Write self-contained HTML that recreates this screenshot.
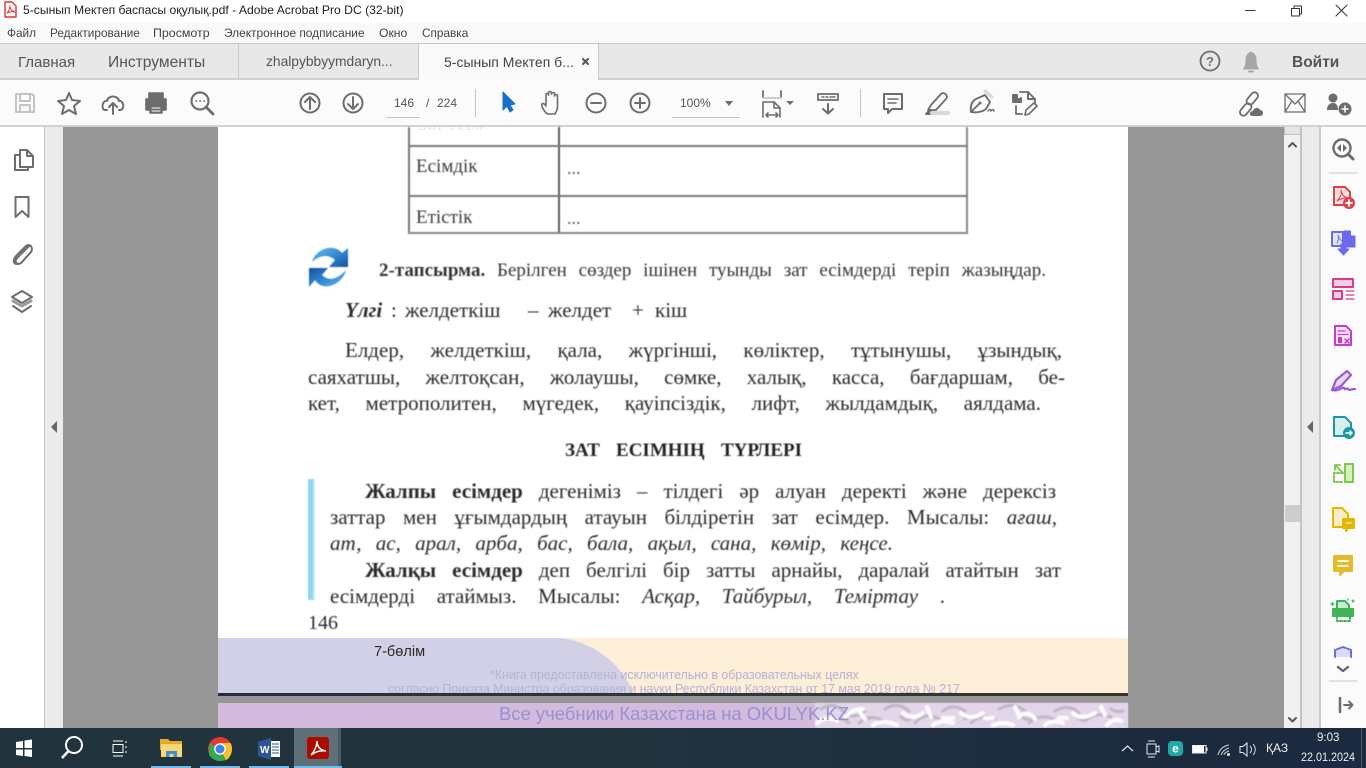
<!DOCTYPE html>
<html><head><meta charset="utf-8"><title>Acrobat</title>
<style>
html,body{margin:0;padding:0;width:1366px;height:768px;overflow:hidden;background:#979797}
*{box-sizing:border-box}
.a{position:absolute}
.t{position:absolute;white-space:nowrap;font-family:"Liberation Sans",sans-serif;color:#333}
.l{position:absolute;font-family:"Liberation Serif",serif;color:#2a2a2a;font-size:21px;line-height:28px;height:28px;overflow:hidden;text-align:justify;text-align-last:justify;filter:blur(.45px)}
.l i{font-style:italic}
.w{position:absolute;top:296px;white-space:nowrap;font-family:"Liberation Serif",serif;color:#2a2a2a;font-size:21px;line-height:28px;filter:blur(.45px)}
svg{position:absolute;left:0;top:0;overflow:visible}
</style></head><body>
<!-- chrome -->
<div class="a" style="left:0;top:0;width:1366px;height:23px;background:#fff"></div>
<div class="a" style="left:0;top:23px;width:1366px;height:20px;background:#f9f9f9"></div>
<div class="a" style="left:0;top:43px;width:1366px;height:37px;background:#e8e8e8;border-top:1px solid #c6c6c6;border-bottom:2px solid #cfcfcf"></div>
<div class="a" style="left:238px;top:44px;width:181px;height:34px;border-left:1px solid #c8c8c8;border-right:1px solid #c8c8c8"></div>
<div class="a" style="left:419px;top:44px;width:180px;height:36px;background:#fafafa;border-right:1px solid #c8c8c8"></div>
<div class="a" style="left:0;top:80px;width:1366px;height:45px;background:#fbfbfb"></div>
<div class="a" style="left:0;top:125px;width:1366px;height:2px;background:#d2d2d2"></div>
<!-- side panels -->
<div class="a" style="left:0;top:127px;width:45px;height:601px;background:#fff;border-right:1px solid #c8c8c8"></div>
<div class="a" style="left:45px;top:127px;width:18px;height:601px;background:#ebebeb"></div>
<div class="a" style="left:1284px;top:127px;width:18px;height:601px;background:#f1f1f1;border-right:2px solid #c4c4c4"></div>
<div class="a" style="left:1284px;top:127px;width:17px;height:8px;background:#e4e4e4;border:1px solid #bdbdbd;border-top:0"></div>
<div class="a" style="left:1285px;top:505px;width:15px;height:17px;background:#cdcdcd"></div>
<div class="a" style="left:1302px;top:127px;width:17px;height:601px;background:#ebebeb"></div>
<div class="a" style="left:1319px;top:127px;width:47px;height:601px;background:#fbfbfb;border-left:2px solid #cbcbcb"></div>
<!-- page -->
<div class="a" style="left:218px;top:127px;width:910px;height:511px;background:#fff"></div>
<div class="a" style="left:218px;top:638px;width:910px;height:55px;background:#fdeed8"></div>
<svg width="1366" height="768"><path d="M218 638H560C595 642 622 665 633 693H218Z" fill="#d2d0e6"/></svg>
<div class="a" style="left:218px;top:693px;width:910px;height:3px;background:linear-gradient(90deg,#2a2a40,#33333f 55%,#3a3526)"></div>
<div class="a" style="left:218px;top:703px;width:910px;height:25px;background:#d2bbdc"></div>
<div class="a" style="left:815px;top:703px;width:313px;height:25px;background:#e3d6ea;overflow:hidden;filter:blur(.7px)">
<svg width="313" height="25" fill="none" stroke-linecap="round"><g stroke="#bdb8c4" stroke-width="3"><path d="M6 6q12-8 22 2t22 0M44 20q12-10 24-2M70 6q12-8 24 2M100 20q10-12 24-4M128 8q10-8 22 0M156 20q10-10 24-4M184 6q14-8 26 2M214 20q10-10 24-4M240 8q14-8 24 2M270 18q10-10 26-4M20 18q8-5 14 2M86 14q6 6 12 0M150 16q6-6 12 0M262 14q6 6 12 0M206 12q4 6 10 4M296 6q6 4 12 2"/></g><g stroke="#fff" stroke-width="4"><path d="M2 20q10-8 20-2M30 14q8-8 18-8M58 22q10-6 24 0M88 10q10 8 20 0M118 22q8-6 20-2M146 10q10 8 22 0M178 22q10-4 20 0M204 14q8-8 16 2M230 22q8-6 18-2M258 10q8 8 22 0M292 22q8-8 14-4M44 8l6 8M112 4l4 10M200 4l4 8M286 4l4 8M128 15h10M170 15h8M244 15h8"/></g></svg></div>

<!-- table -->
<div class="a" style="left:418px;top:127px;width:90px;height:7px;overflow:hidden"><div class="t" style="left:0;top:-13px;font:19px 'Liberation Serif',serif;color:#e8e8e8">Зат есім</div></div>
<div class="a" style="left:567px;top:127px;width:20px;height:7px;overflow:hidden;background:#fff"><div class="t" style="left:0;top:-16px;font:19px 'Liberation Serif',serif;color:#ccc">...</div></div>
<div style="position:absolute;left:0;top:0;filter:blur(.4px)">
<div class="a" style="left:408px;top:127px;width:2px;height:106px;background:#777"></div>
<div class="a" style="left:558px;top:127px;width:2px;height:106px;background:#5c5c5c"></div>
<div class="a" style="left:966px;top:127px;width:2px;height:106px;background:#888"></div>
<div class="a" style="left:408px;top:145px;width:560px;height:2px;background:#7a7a7a"></div>
<div class="a" style="left:408px;top:195px;width:560px;height:2px;background:#7a7a7a"></div>
<div class="a" style="left:408px;top:232px;width:560px;height:2px;background:#888"></div>
</div>
<div class="l" style="left:416px;top:153px;width:62px;font-size:19px;color:#3a3a3a">Есімдік</div>
<div class="l" style="left:416px;top:204px;width:56px;font-size:19px;color:#3a3a3a">Етістік</div>
<div class="l" style="left:567px;top:154px;width:16px;font-size:18px;color:#555">...</div>
<div class="l" style="left:567px;top:204px;width:16px;font-size:18px;color:#555">...</div>

<!-- refresh icon -->
<svg width="1366" height="768" style="filter:blur(.5px)"><defs><linearGradient id="b1" x1="0" y1="0" x2="1" y2="1"><stop offset="0" stop-color="#6fbfe8"/><stop offset=".55" stop-color="#2f86d2"/><stop offset="1" stop-color="#174f9f"/></linearGradient><linearGradient id="b2" x1="1" y1="1" x2="0" y2="0"><stop offset="0" stop-color="#6fbfe8"/><stop offset=".5" stop-color="#2f86d2"/><stop offset="1" stop-color="#174f9f"/></linearGradient></defs>
<path d="M312 262C316 248 334 243 342 253L348 248V267H329L335 260C328 254 320 255 312 262Z" fill="url(#b1)"/>
<path d="M346 270C342 286 322 292 315 280L309 287V268H328L322 275C329 282 338 279 346 270Z" fill="url(#b2)"/></svg>

<!-- body text -->
<div class="l" style="left:379px;top:257px;width:667px;font-size:19px;color:#333"><b>2-тапсырма.</b> Берілген сөздер ішінен туынды зат есімдерді теріп жазыңдар.</div>
<b class="w" style="left:345px"><i>Үлгі</i></b><span class="w" style="left:391px">:</span><span class="w" style="left:405px">желдеткіш</span><span class="w" style="left:528px">–</span><span class="w" style="left:548px">желдет</span><span class="w" style="left:632px">+</span><span class="w" style="left:655px">кіш</span>
<div class="l" style="left:345px;top:336px;width:717px">Елдер, желдеткіш, қала, жүргінші, көліктер, тұтынушы, ұзындық,</div>
<div class="l" style="left:308px;top:363px;width:757px">саяхатшы, желтоқсан, жолаушы, сөмке, халық, касса, бағдаршам, бе-</div>
<div class="l" style="left:308px;top:389px;width:733px">кет, метрополитен, мүгедек, қауіпсіздік, лифт, жылдамдық, аялдама.</div>
<div class="l" style="left:565px;top:437px;width:237px;font-size:19px;color:#222"><b>ЗАТ ЕСІМНІҢ ТҮРЛЕРІ</b></div>
<div class="a" style="left:308px;top:479px;width:7px;height:121px;background:#8fd7ef;border-right:2px solid #c5e9f5;filter:blur(.4px)"></div>
<div class="l" style="left:365px;top:477px;width:691px"><b>Жалпы есімдер</b> дегеніміз – тілдегі әр алуан деректі және дерексіз</div>
<div class="l" style="left:330px;top:503px;width:727px">заттар мен ұғымдардың атауын білдіретін зат есімдер. Мысалы: <i>ағаш,</i></div>
<div class="l" style="left:330px;top:529px;width:563px"><i>ат, ас, арал, арба, бас, бала, ақыл, сана, көмір, кеңсе.</i></div>
<div class="l" style="left:365px;top:556px;width:696px"><b>Жалқы есімдер</b> деп белгілі бір затты арнайы, даралай атайтын зат</div>
<div class="l" style="left:330px;top:582px;width:615px">есімдерді атаймыз. Мысалы: <i>Асқар, Тайбурыл, Теміртау</i> .</div>
<div class="l" style="left:308px;top:609px;width:40px;font-size:20px;text-align-last:left">146</div>
<div class="t" style="left:374px;top:643px;font-size:15px;color:#2a2a2a;transform-origin:0 0;transform:scaleX(.97);filter:blur(.35px)">7-бөлім</div>
<div class="t" style="left:490px;top:667px;font-size:13px;color:#b5b2d6;transform-origin:0 0;transform:scaleX(.95)">*Книга предоставлена исключительно в образовательных целях</div>
<div class="a" style="left:380px;top:681px;width:600px;height:12px;overflow:hidden"><div class="t" style="left:8px;top:0;font-size:13px;color:#b5b2d6;transform-origin:0 0;transform:scaleX(.945)">согласно Приказа Министра образования и науки Республики Казахстан от 17 мая 2019 года № 217</div></div>
<div class="t" style="left:499px;top:704px;font-size:18px;color:#9a91cf;transform-origin:0 0;transform:scaleX(1.025)">Все учебники Казахстана на OKULYK.KZ</div>

<!-- chrome text -->
<div class="t" style="left:23px;top:3px;font-size:12.15px;color:#222">5-сынып Мектеп баспасы оқулық.pdf - Adobe Acrobat Pro DC (32-bit)</div>
<div class="t" style="left:7px;top:26px;font-size:11.8px;color:#444">Файл</div>
<div class="t" style="left:50px;top:26px;font-size:11.8px;color:#444">Редактирование</div>
<div class="t" style="left:153px;top:26px;font-size:12.4px;color:#444">Просмотр</div>
<div class="t" style="left:224px;top:26px;font-size:11.9px;color:#444">Электронное подписание</div>
<div class="t" style="left:379px;top:26px;font-size:12.2px;color:#444">Окно</div>
<div class="t" style="left:422px;top:26px;font-size:11.8px;color:#444">Справка</div>
<div class="t" style="left:18px;top:54px;font-size:15px;color:#555">Главная</div>
<div class="t" style="left:108px;top:54px;font-size:15.6px;color:#555">Инструменты</div>
<div class="t" style="left:266px;top:54px;font-size:13.8px;color:#555">zhalpybbyymdaryn...</div>
<div class="t" style="left:444px;top:54px;font-size:14px;color:#444">5-сынып Мектеп б...</div>
<div class="t" style="left:1292px;top:54px;font-size:15.5px;font-weight:bold;color:#555">Войти</div>
<div class="t" style="left:394px;top:96px;font-size:12px;color:#555">146</div>
<div class="t" style="left:426px;top:96px;font-size:12px;color:#555">/</div>
<div class="t" style="left:437px;top:96px;font-size:12px;color:#555">224</div>
<div class="t" style="left:680px;top:96px;font-size:12px;color:#555">100%</div>
<div class="a" style="left:386px;top:117px;width:34px;height:1px;background:#c4c4c4"></div>
<div class="a" style="left:672px;top:117px;width:68px;height:1px;background:#c4c4c4"></div>
<div class="a" style="left:475px;top:89px;width:1px;height:28px;background:#c4c4c4"></div>
<div class="a" style="left:860px;top:89px;width:1px;height:28px;background:#c4c4c4"></div>

<!-- chrome icons -->
<svg width="1366" height="768" fill="none" stroke="#6d6d6d" stroke-width="2" stroke-linecap="round" stroke-linejoin="round">
<!-- title bar -->
<path d="M5 2H12L16 6V17H5Z" stroke="#d33" stroke-width="1.4" fill="#fff"/><path d="M7 13C9 11 10 8 10 6C10 9 12 11 15 12C12 11 9 12 7 13Z" stroke="#d33" stroke-width="1"/>
<g stroke="#333" stroke-width="1"><path d="M1245.5 10.5H1255"/><path d="M1291.5 8.5H1299.5V16H1291.5ZM1294 8.5V6H1301.5V14H1299.5"/><path d="M1336 5L1347 16M1347 5L1336 16"/></g>
<path d="M583 59L588 64M588 59L583 64" stroke="#555" stroke-width="2"/>
<!-- right tab icons -->
<circle cx="1210" cy="61" r="9.5" stroke-width="1.8"/><text x="1210" y="66" font-family="Liberation Sans" font-size="13" font-weight="bold" text-anchor="middle" fill="#6d6d6d" stroke="none">?</text>
<path d="M1243.500 69C1246 66 1246 63 1246 59C1246 55 1249 53 1251 52C1253 53 1256 55 1256 59C1256 63 1256 66 1258.500 69Z" fill="#a6a6a6" stroke="#a6a6a6" stroke-width="1"/><path d="M1249 71.500H1253" stroke="#a6a6a6"/>
<!-- toolbar left -->
<g stroke="#c4c4c4"><path d="M16 94H32L34 96V112H16Z"/><path d="M20 94V101H30V94M20 112V105H30V112"/></g>
<path d="M69 93L72 100L80 101L74 106L76 114L69 110L62 114L64 106L58 101L66 100Z"/>
<path d="M107 110H105C101 110 102 100 107 101C108 95 118 95 119 101C124 100 125 110 120 110H119M113 114V104M109 107L113 103L117 107" stroke-width="2"/>
<path d="M149 99V93H163V99M146 99H166V110H146ZM150 106H162V113H150Z" fill="#6d6d6d" stroke-width="1.6"/><path d="M152 108H160M152 111H160" stroke="#fff" stroke-width="1"/>
<circle cx="200" cy="101" r="8.5" stroke-width="2.200"/><path d="M206 107L213 114" stroke-width="2.8"/><path d="M196 101h.5M200 101h.5M204 101h.5" stroke-width="1.6"/>
<circle cx="310" cy="103" r="9.5"/><path d="M310 109V97M305 102L310 97L315 102"/>
<circle cx="353" cy="103" r="9.5"/><path d="M353 97V109M348 104L353 109L358 104"/>
<path d="M503 92V110L507 106L510 112L513 110L510 105L515 104Z" fill="#1b6fc9" stroke="#1b6fc9" stroke-width="1"/>
<path d="M546 113C543 109 541 106 542 104C543 103 545 104 546 106V95C546 93 548 93 548.500 95V93C548.500 91 551 91 551.500 93V94C552 92 554.500 92 554.500 94V96C555 94 557.500 94 557.500 96V107C557.500 110 556 112 555 114H548Z" stroke-width="1.6"/>
<circle cx="596" cy="103" r="9.500"/><path d="M591 103H601"/>
<circle cx="640" cy="103" r="9.500"/><path d="M635 103H645M640 98V108"/>
<path d="M725 101H733L729 106Z" fill="#6d6d6d" stroke="none"/>
<!-- fit -->
<path d="M763 91V98H781V91" stroke-width="1.8"/><path d="M763 98H781" stroke="#ccc" stroke-width="2"/>
<path d="M763 117V102H774L780 108V117M774 102V108H780M766 115H778M766 115L768 113M766 115L768 117M778 115L776 113M778 115L776 117" stroke-width="1.6"/>
<path d="M786 101H794L790 105Z" fill="#6d6d6d" stroke="none"/>
<path d="M818 94H838V100H818Z" stroke-width="1.8"/><path d="M822 97H824M826 97H828M830 97H832M833 97H835" stroke-width="1.4"/><path d="M828 104V113M823 109L828 113.500L833 109"/>
<path d="M884 94H902V109H892L888 113V109H884Z"/><path d="M888 99H898M888 103H896" stroke-width="1.6"/>
<path d="M928 110L931 105L941 94C944 91 949 96 946 99L936 110Z" stroke-width="1.8"/><path d="M926 114L930 110L933 113L931 114Z" fill="#6d6d6d"/><path d="M932 113H948" stroke="#d8d8d8" stroke-width="4"/>
<path d="M971 112C970 106 972 101 976 99L985 95L990 102L986 109C982 112 976 113 971 112ZM971 112L979 104" stroke-width="1.900"/><circle cx="980" cy="103" r="1.500" fill="#6d6d6d" stroke="none"/><path d="M988 111q2-3 3 0q2-3 3 0" stroke-width="1.500"/><path d="M985 91L992 97" stroke="#d8d8d8" stroke-width="3"/>
<path d="M1017 98V95H1013V102H1021V98" fill="#6d6d6d"/><path d="M1020 92H1028L1035 99V103M1016 106V114H1022" stroke-width="1.8"/><path d="M1028 92V99H1035"/><path d="M1025 115L1026 110L1034 103L1037 106L1029 114Z" stroke-width="1.6"/>
<!-- share -->
<g stroke-width="1.800"><rect x="-9" y="-3.500" width="14" height="7" rx="3.500" transform="translate(1247 108) rotate(-50)"/><rect x="-5" y="-3.500" width="14" height="7" rx="3.500" transform="translate(1251 100) rotate(-50)"/></g><path d="M1252 116C1249 116 1249 111 1253 111C1254 107 1259 107 1260 110C1264 110 1264 116 1260 116Z" fill="#6d6d6d" stroke="none"/>
<path d="M1285 94H1305V112H1285ZM1285 94L1295 104L1305 94M1285 112L1292 101M1305 112L1298 101" stroke-width="1.3"/>
<circle cx="1333" cy="98" r="4.500" fill="#6d6d6d" stroke="none"/><path d="M1327 110C1327 104 1331 103 1333 103C1335 103 1338 104 1338 110Z" fill="#6d6d6d" stroke="none"/><circle cx="1345" cy="109" r="6.500" fill="#6d6d6d" stroke="none"/><path d="M1342 109H1348M1345 106V112" stroke="#fff" stroke-width="1.500"/>
<!-- left panel -->
<path d="M20 150H27L33 156V167H20ZM27 150V156H33M20 155H15V170H28V167" stroke-width="2"/>
<path d="M15.500 197H28.500V217L22 211L15.500 217Z" stroke-width="2"/>
<path d="M29 246L17 258C13 263 19 266 22 262L31 252C34 247 29 243 26 246L16 256C12 261 14 264 17 264" stroke-width="2"/>
<path d="M22 291L32 297L22 303L12 297Z" stroke-width="2"/><path d="M13 301L22 306L31 301" stroke-width="3" stroke="#9a9a9a"/><path d="M13 306L22 312L31 306" stroke-width="2"/>
<path d="M57 421V433L51 427Z" fill="#666" stroke="none"/>
<path d="M1313 421V433L1307 427Z" fill="#666" stroke="none"/>
<path d="M1289 146.500L1292.500 143L1296 146.500" stroke="#555" stroke-width="2"/><path d="M1289 718L1292.500 721.500L1296 718" stroke="#555" stroke-width="2"/>
<!-- right panel -->
<circle cx="1342" cy="148" r="8.500" stroke-width="2.400"/><path d="M1348 154L1353 159" stroke-width="3"/><path d="M1341 144L1337 148L1341 152ZM1343 144L1347 148L1343 152Z" fill="#6d6d6d" stroke="none"/>
<path d="M1329 173H1357" stroke="#c8c8c8" stroke-width="1"/>
<path d="M1334 187H1345L1350 192V205H1334Z" fill="#fae0e0" stroke="#e0404b"/><path d="M1337 201C1340 198 1342 195 1341 190C1342 195 1344 197 1348 198C1344 197 1341 199 1337 201Z" stroke="#e0404b" stroke-width="1"/><circle cx="1349" cy="203" r="6" fill="#e0404b" stroke="none"/><path d="M1346 203H1352M1349 200V206" stroke="#fff" stroke-width="1.800"/>
<path d="M1332 232H1343V246H1332Z" fill="#e6e6fb" stroke="#6a6aee"/><path d="M1337 243C1338 241 1339 238 1338 235C1339 238 1340 240 1342 241" stroke="#6a6aee" stroke-width="1"/><path d="M1344 231H1350.500V236H1355V247H1344Z" fill="#6a6aee" stroke="#6a6aee" stroke-width="1"/><path d="M1341 244H1346V249H1349L1343.500 255L1338 249H1341Z" fill="#6a6aee" stroke="#6a6aee" stroke-width="1"/>
<path d="M1333 279H1353V287H1333Z" fill="#f3cfe0" stroke="#db3a8c"/><path d="M1333 291H1342V299H1333Z" fill="#f3cfe0" stroke="#db3a8c"/><path d="M1346 291H1354M1346 295H1354M1346 299H1354" stroke="#db3a8c" stroke-width="1.300"/>
<path d="M1335 326H1346L1351 331V345H1335Z" fill="#f7e4f7" stroke="#c93cc9"/><path d="M1338 331H1345M1338 334.500H1348" stroke="#c93cc9" stroke-width="1.300"/><path d="M1338 337H1342V343H1338Z" fill="#c93cc9" stroke="none"/><path d="M1345 339L1349 343M1349 339L1345 343" stroke="#c93cc9" stroke-width="1.500"/>
<path d="M1332 390L1336 380L1347 371L1351 375L1341 386Z" fill="#e8dcf8" stroke="#9a5ad8" stroke-width="2.200"/><path d="M1332 390C1340 392 1342 386 1344 388C1345 391 1347 387 1348 389C1349 391 1351 389 1355 389" stroke="#9a5ad8" stroke-width="2.200"/>
<path d="M1334 417H1345L1351 423V436H1334Z" fill="#d8eeee" stroke="#1a9aa0"/><circle cx="1349" cy="433" r="6" fill="#1a9aa0" stroke="none"/><path d="M1346 433H1352M1350 431L1352 433L1350 435" stroke="#fff" stroke-width="1.500"/>
<path d="M1345 464H1353V482H1345Z" fill="#d5efc0" stroke="#7ec84a"/><path d="M1343 473H1334V482H1343" stroke="#7ec84a" stroke-dasharray="2 2"/><path d="M1342 472L1335 465M1335 470V465H1340" stroke="#7ec84a" stroke-width="1.800"/>
<path d="M1333 508H1342L1348 514V527H1333Z" fill="#f8efc8" stroke="#e5b800"/><path d="M1343 519H1354V528H1348L1346 531V528H1343Z" fill="#e5b800" stroke="#e5b800"/><path d="M1346 523H1351" stroke="#fff" stroke-width="1"/>
<path d="M1334 556H1352V571H1344L1340 575V571H1334Z" fill="#e3bc2b" stroke="#e3bc2b"/><path d="M1338 561H1348M1338 566H1348" stroke="#fff" stroke-width="1.800"/>
<path d="M1337 601H1345L1349 605V609H1337Z" fill="#c8ecd0" stroke="#3fb356"/><path d="M1333 609H1353V616H1333Z" fill="#3fb356" stroke="#3fb356"/><path d="M1337 616V621H1350V616" stroke="#3fb356" stroke-dasharray="2 2"/><path d="M1352 601H1354M1353 600V602M1331 604H1334M1332.500 602.500V605.500M1348 599V600" stroke="#3fb356" stroke-width="1.300"/>
<path d="M1335 657V650L1343 647L1351 650V657" fill="#dcdcfa" stroke="#6a6aee"/>
<path d="M1338 667L1343 671L1348 667" stroke="#666" stroke-width="2.400"/>
<path d="M1329 681H1357" stroke="#c8c8c8" stroke-width="1"/>
<path d="M1340 698V712" stroke="#6d6d6d" stroke-width="2.500"/><path d="M1344 705H1352M1349 701.500L1352.500 705L1349 708.500"/>
</svg>

<!-- taskbar -->
<div class="a" style="left:0;top:728px;width:1366px;height:40px;background:linear-gradient(90deg,#21343e 0%,#21343e 45%,#1b2a3e 85%,#1b2a3e 100%)"></div>
<div class="a" style="left:294px;top:728px;width:47px;height:40px;background:#5e7077"></div>
<div class="a" style="left:338px;top:728px;width:3px;height:40px;background:#4b5c64"></div>
<div class="a" style="left:151px;top:766px;width:40px;height:2px;background:#76b9ed"></div>
<div class="a" style="left:200px;top:766px;width:40px;height:2px;background:#76b9ed"></div>
<div class="a" style="left:249px;top:766px;width:40px;height:2px;background:#76b9ed"></div>
<div class="a" style="left:294px;top:766px;width:48px;height:2px;background:#76b9ed"></div>
<svg width="1366" height="768" fill="none">
<path d="M16 742L23 741V748H16ZM24.500 740.500L32 739.500V748H24.500ZM16 749.500H23V756L16 755ZM24.500 749.500H32V757L24.500 756Z" fill="#fff"/>
<circle cx="74" cy="745" r="8" stroke="#fff" stroke-width="2"/><path d="M68.500 751L62 758" stroke="#fff" stroke-width="2.500"/>
<g stroke="#fff" stroke-width="1"><path d="M113 744.500H123V752.500H113ZM113 741H123M113 756H123M126 741V743M126 746V748M126 751V753"/></g>
<path d="M160 739H168L170 741H182V750H160Z" fill="#e8a92a"/><path d="M161 744H182V757H161Z" fill="#f8d775"/><path d="M166 757V751H177V757H173.500V754H169.500V757Z" fill="#3c8fd6"/>
<circle cx="220" cy="749" r="12" fill="#e33b2e"/><path d="M220 749L209.600 743L209 755C211 758 215 761 220 761C222 761 224 760.800 226 760Z" fill="#34a853"/><path d="M220 749L226 760C229 759 232 754 232 749C232 746 231 743 230 743H220Z" fill="#fbc02d"/><circle cx="220" cy="749" r="5.800" fill="#fff"/><circle cx="220" cy="749" r="4.500" fill="#3f83ea"/>
<path d="M258 742L271 738V760L258 756Z" fill="#2b579a"/><path d="M271 741H280V757H271Z" fill="#fff"/><path d="M272 744H279M272 747H279M272 750H279M272 753H279" stroke="#2b579a" stroke-width="1"/><text x="260" y="753" font-family="Liberation Sans" font-size="10" font-weight="bold" fill="#fff">W</text>
<rect x="307" y="737" width="22" height="22" rx="3" fill="#ad0b00"/><path d="M311 755C314 752 317 746 317 741C317 747 320 750 326 751C320 750 315 752 311 755Z" stroke="#fff" stroke-width="1.500"/>
<path d="M1122 751L1127.500 746L1133 751" stroke="#e8e8e8" stroke-width="1.200"/>
<path d="M1147 744H1156V754H1147ZM1156 747L1159 746V752L1156 751" stroke="#e8e8e8" stroke-width="1"/><path d="M1148 741H1155M1148 757H1155" stroke="#e8e8e8" stroke-width="1"/>
<rect x="1168" y="741" width="15" height="15" rx="4" fill="#23a8a8"/><text x="1175.500" y="752.500" font-family="Liberation Sans" font-size="12" font-weight="bold" text-anchor="middle" fill="#fff">e</text>
<path d="M1192.500 745.500H1206V753H1192.500Z" stroke="#eee" stroke-width="1"/><path d="M1193 746H1204V752.500H1193Z" fill="#fff"/><path d="M1207 747.500V751" stroke="#eee"/>
<path d="M1218 755C1219 750 1223 746 1229 745M1221 755C1222 752 1225 749 1229 748M1224 755C1224 753 1226 752 1229 751" stroke="#cfd4d8" stroke-width="1"/><circle cx="1228.500" cy="754.500" r="1.500" fill="#eee"/>
<path d="M1240 746.500H1243L1247 743V756L1243 752.500H1240Z" stroke="#eee" stroke-width="1"/><path d="M1250 746C1252 748 1252 751 1250 753M1253 744C1256 747 1256 752 1253 755" stroke="#cfd4d8" stroke-width="1"/>
</svg>
<div class="t" style="left:1266px;top:741px;font-size:12px;color:#f0f0f0">ҚАЗ</div>
<div class="t" style="left:1317px;top:732px;font-size:11.500px;color:#f0f0f0">9:03</div>
<div class="t" style="left:1301px;top:750px;font-size:12px;color:#f0f0f0;transform-origin:0 0;transform:scaleX(.9)">22.01.2024</div>
<div class="a" style="left:1361px;top:728px;width:1px;height:40px;background:#4a5666"></div>
</body></html>
